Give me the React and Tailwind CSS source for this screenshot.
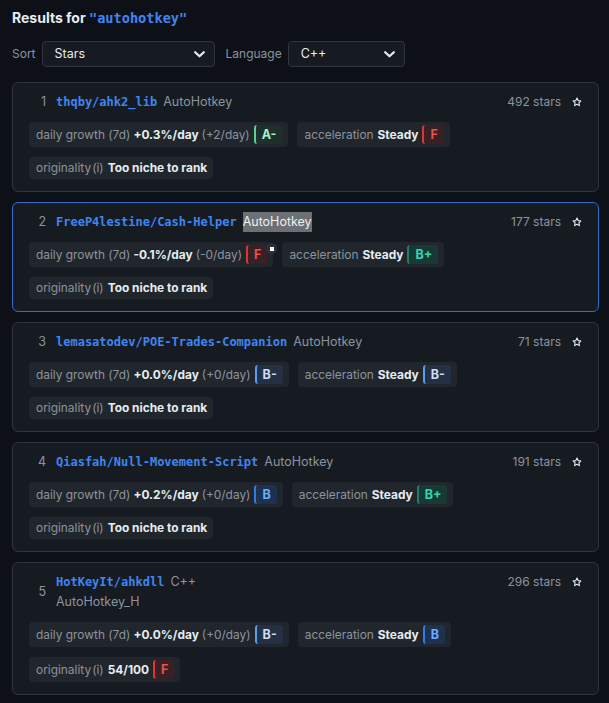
import React from "react";

const GRADE = {
  "A-": "bg-[#1d302c] border-[#56d39a] text-[#a7efcf]",
  F: "bg-[#3a1f25] border-[#da3633] text-[#e5534b]",
  "B-": "bg-[#243145] border-[#5b9bf0] text-[#cfdcf2]",
  B: "bg-[#1d3150] border-[#2f7be8] text-[#69aefc]",
  "B+": "bg-[#173a35] border-[#1d7f66] text-[#33d6ad]",
};

const repos = [
  { n: 1, name: "thqby/ahk2_lib", lang: "AutoHotkey", stars: 492, g: "+0.3%/day", gd: "(+2/day)", gg: "A-", ag: "F", orig: "Too niche to rank" },
  { n: 2, name: "FreeP4lestine/Cash-Helper", lang: "AutoHotkey", sel: true, active: true, stars: 177, g: "-0.1%/day", gd: "(-0/day)", gg: "F", ag: "B+", orig: "Too niche to rank" },
  { n: 3, name: "lemasatodev/POE-Trades-Companion", lang: "AutoHotkey", stars: 71, g: "+0.0%/day", gd: "(+0/day)", gg: "B-", ag: "B-", orig: "Too niche to rank" },
  { n: 4, name: "Qiasfah/Null-Movement-Script", lang: "AutoHotkey", stars: 191, g: "+0.2%/day", gd: "(+0/day)", gg: "B", ag: "B+", orig: "Too niche to rank" },
  { n: 5, name: "HotKeyIt/ahkdll", lang: "C++", desc: "AutoHotkey_H", stars: 296, g: "+0.0%/day", gd: "(+0/day)", gg: "B-", ag: "B", orig: "54/100", og: "F" },
];

const mono = { fontFamily: '"DejaVu Sans Mono", "Liberation Mono", monospace' };

function Badge({ g }) {
  return (
    <span className={`ml-[1px] inline-flex h-[19px] items-center border-l-2 rounded-[3px] px-[6px] font-bold text-[12.5px] ${GRADE[g]}`}>
      {g}
    </span>
  );
}

function Chevron() {
  return (
    <svg width="11" height="7" viewBox="0 0 11 7" fill="none">
      <path d="M1.2 1.2 L5.5 5.3 L9.8 1.2" stroke="#e6edf3" strokeWidth="2.2" strokeLinecap="round" strokeLinejoin="round" />
    </svg>
  );
}

function Star() {
  return (
    <svg width="10" height="10" viewBox="0 0 24 24" fill="none">
      <path d="M12 2.5l2.9 6.2 6.6.8-4.9 4.6 1.3 6.6L12 17.4l-5.9 3.3 1.3-6.6-4.9-4.6 6.6-.8z" stroke="#e6edf3" strokeWidth="2.6" strokeLinejoin="round" />
    </svg>
  );
}

function Card({ r }) {
  return (
    <div
      className={`relative rounded-md border bg-[#161b22] pl-4 pr-4 pt-[9px] pb-3 ${r.active ? "border-[#2f6bd0]" : "border-[#30363d]"}`}
    >
      <div className="flex items-start justify-between">
        <div className="flex items-center">
          <span className="w-[17px] text-right text-[12.5px] text-[#8b949e] leading-5">{r.n}</span>
          <div className="ml-[10px]">
            <div className="flex items-center leading-5">
              <span className="text-[12px] font-bold text-[#3f86f2]" style={mono}>{r.name}</span>
              <span className={`ml-[6px] text-[12.5px] ${r.sel ? "bg-[#6c6f74] text-[#eef0f2]" : "text-[#8b949e]"}`}>{r.lang}</span>
            </div>
            {r.desc && <div className="text-[12.5px] text-[#8b949e] leading-5">{r.desc}</div>}
          </div>
        </div>
        <div className="flex items-center leading-5 text-[12px] text-[#8b949e]">
          <span>{r.stars} stars</span>
          <span className="ml-[11px] flex items-center"><Star /></span>
        </div>
      </div>
      <div className="relative mt-[10px] flex flex-wrap gap-x-[9px] gap-y-[10px] text-[11.9px]">
        <div className="inline-flex items-center gap-[3px] rounded bg-[#21262d] pl-[7px] pr-[6px] py-[3px] leading-4">
          <span className="text-[#8b949e]">daily growth (7d)</span>
          <span className="font-bold text-[#e6edf3]">{r.g}</span>
          <span className="text-[#8b949e]">{r.gd}</span>
          <Badge g={r.gg} />
        </div>
        <div className="inline-flex items-center gap-[3px] rounded bg-[#21262d] pl-[7px] pr-[6px] py-[3px] leading-4">
          <span className="text-[#8b949e]">acceleration</span>
          <span className="ml-[1px] font-bold text-[#e6edf3]">Steady</span>
          <Badge g={r.ag} />
        </div>
        <div className="inline-flex items-center gap-[3px] rounded bg-[#21262d] pl-[7px] pr-[6px] py-[3px] leading-4">
          <span className="text-[#8b949e]">originality<span className="ml-[1px]">(i)</span></span>
          <span className="ml-[1px] font-bold text-[#e6edf3]">{r.orig}</span>
          {r.og && <Badge g={r.og} />}
        </div>
        {r.active && (
          <div className="absolute left-[237px] top-[1px] flex h-[11px] w-[11px] items-center justify-center rounded-full bg-[#2b2f36]">
            <div className="h-[4px] w-[4px] bg-white" />
          </div>
        )}
      </div>
    </div>
  );
}

export default function App() {
  return (
    <div
      className="min-h-[703px] w-[609px] bg-[#0d1117] pl-3 pr-[10px] pt-2 pb-4 text-[#e6edf3]"
      style={{ fontFamily: 'Inter, "Noto Sans", sans-serif' }}
    >
      <div className="h-5 leading-5 text-[14px] font-bold">
        Results for{" "}
        <span className="text-[#3f86f2] text-[13.6px]" style={mono}>"autohotkey"</span>
      </div>
      <div className="mt-[13px] flex items-center text-[12px]">
        <span className="text-[#8b949e]">Sort</span>
        <div className="ml-[6px] flex h-[26px] w-[173px] items-center justify-between rounded border border-[#30363d] bg-[#161b22] pl-3 pr-[9px] text-[12.5px]">
          <span>Stars</span>
          <Chevron />
        </div>
        <span className="ml-[11px] text-[#8b949e]">Language</span>
        <div className="ml-[6px] flex h-[26px] w-[117px] items-center justify-between rounded border border-[#30363d] bg-[#161b22] pl-3 pr-[9px] text-[12.5px]">
          <span>C++</span>
          <Chevron />
        </div>
      </div>
      <div className="mt-[15px] flex flex-col gap-[10px]">
        {repos.map((r) => (
          <Card key={r.n} r={r} />
        ))}
      </div>
    </div>
  );
}
